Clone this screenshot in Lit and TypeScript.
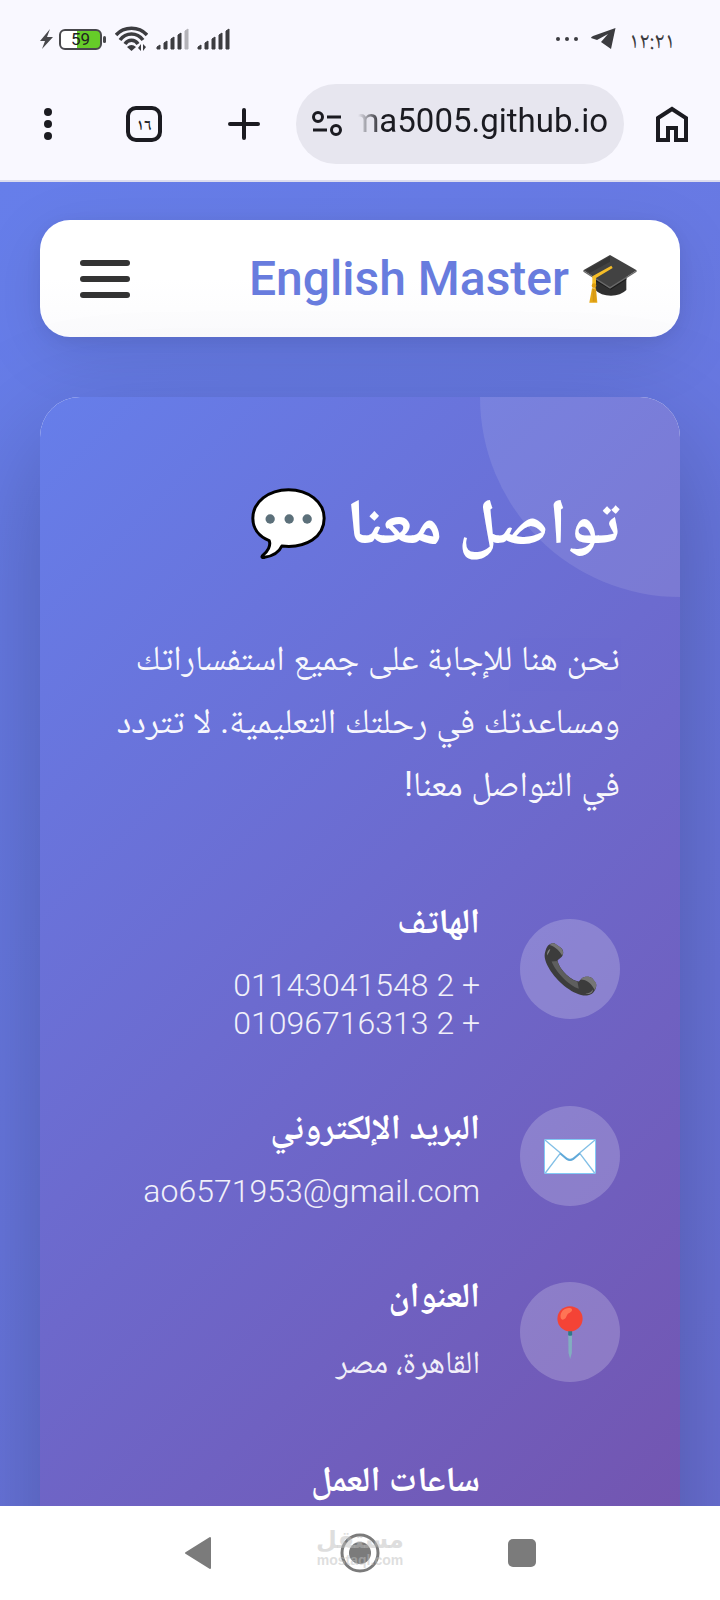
import { LitElement, html, css, svg } from "lit";
import { customElement } from "lit/decorators.js";

const phoneIcon = html`
  <svg class="emoji" width="53" height="53" viewBox="0 0 158 160" aria-hidden="true">
    <path d="M4 22C8 6 20-2 30 1L50 14C60 22 58 36 52 42L40 52C42 74 76 112 104 116L112 108C120 100 138 100 146 108L156 122C160 134 150 156 132 158C96 164 44 122 20 86C4 60-4 42 4 22Z" fill="#3c3c3c"/>
    <path d="M22 56L40 54C44 76 74 110 100 116L104 138C76 130 34 88 22 56Z" fill="#5e5e5e"/>
    <path d="M16 6C22 0 28 0 34 3L50 14C58 22 58 32 54 38C46 24 34 12 16 6Z" fill="#757575"/>
    <path d="M110 110C120 98 136 100 144 106L156 120C158 128 156 136 152 142C144 124 128 110 110 110Z" fill="#757575"/>
    <path d="M8 38C8 26 12 20 18 18C16 26 12 32 8 38Z" fill="#858585"/>
    <path d="M124 153C134 152 142 148 146 140C148 150 138 156 124 153Z" fill="#757575"/>
  </svg>
`;

const mailIcon = html`
  <svg class="emoji" width="52" height="35" viewBox="0 0 156 105" aria-hidden="true">
    <rect x="1.5" y="1.5" width="153" height="102" rx="2" fill="#fff" stroke="#82caf5" stroke-width="3"/>
    <path d="M4 102L48 44M152 102L108 44" stroke="#82bfe6" stroke-width="4"/>
    <path d="M3 3L66 56Q78 66 90 56L153 3" fill="none" stroke="#82bfe6" stroke-width="4"/>
    <path d="M48 43L68 60Q78 67 88 60L108 43" fill="none" stroke="#5fa8d8" stroke-width="5"/>
  </svg>
`;

const pinIcon = html`
  <svg class="emoji" width="26" height="53" viewBox="0 0 77 160" aria-hidden="true">
    <path d="M33 72H45L44 142L39 160L34 142Z" fill="#82aec0"/>
    <path d="M33 72H45V88Q39 92 33 88Z" fill="#2f7889"/>
    <circle cx="38.500" cy="38.500" r="38" fill="#f44336"/>
    <path d="M10 34C8 16 24 4 38 6C48 8 46 16 38 20C28 24 30 30 24 38C18 44 11 42 10 34Z" fill="#ff7555"/>
  </svg>
`;

const contacts = [
  { icon: phoneIcon, title: "الهاتف", lines: ["+ 2 01143041548", "+ 2 01096716313"], latin: true },
  { icon: mailIcon, title: "البريد الإلكتروني", lines: ["ao6571953@gmail.com"], latin: true },
  { icon: pinIcon, title: "العنوان", lines: ["القاهرة، مصر"], latin: false },
];

@customElement("status-bar")
class StatusBar extends LitElement {
  signal(weak: boolean) {
    return html`
      <svg width="33" height="22" viewBox="0 0 33 22" aria-hidden="true">
        ${[5, 9, 13, 17, 21].map((h, i) => svg`
          <path d="M${i * 7 + 1} 21V${22 - h + 2}L${i * 7 + 4} ${22 - h}V21Z"
            fill=${weak && i === 4 ? "#b4b3b9" : "#3c3c40"}
            stroke=${weak && i === 4 ? "#b4b3b9" : "#3c3c40"} stroke-linejoin="round"/>
        `)}
      </svg>
    `;
  }

  render() {
    return html`
      <div class="group">
        <svg width="13" height="20" viewBox="0 0 13 20" aria-hidden="true">
          <path d="M10 0L0 12H5L2 20L13 8H7Z" fill="#48484c"/>
        </svg>
        <span class="battery">59</span>
        <svg class="wifi" width="33" height="26" viewBox="0 0 33 26" aria-hidden="true">
          <g fill="none" stroke="#3c3c40" stroke-width="3.500">
            <path d="M1 9C9 0 24 0 32 9"/>
            <path d="M5 14C11 6 22 6 28 14"/>
            <path d="M10 18C13 13 20 13 23 18"/>
          </g>
          <path d="M16.500 25L12 21Q16.500 17 21 21Z" fill="#3c3c40"/>
          <path d="M26 18V25L23 22ZM28 25V18L31 21Z" fill="#3c3c40"/>
        </svg>
        ${this.signal(true)}
        ${this.signal(false)}
      </div>
      <div class="group end">
        <svg width="22" height="4" viewBox="0 0 22 4" fill="#3c3c40" aria-hidden="true">
          <circle cx="2" cy="2" r="2"/><circle cx="11" cy="2" r="2"/><circle cx="20" cy="2" r="2"/>
        </svg>
        <svg width="25" height="22" viewBox="0 0 25 22" aria-hidden="true">
          <path d="M24.500 0L20 21L10 14L17 6L6 12L0 10Q0 9 2 8Z" fill="#3c3c40"/>
        </svg>
        <time>١٢:٢١</time>
      </div>
    `;
  }

  static styles = css`
    :host {
      display: flex;
      justify-content: space-between;
      align-items: center;
      height: 78px;
      padding: 0 45px 0 40px;
    }
    .group {
      display: flex;
      align-items: center;
      gap: 8px;
    }
    .end {
      gap: 13px;
    }
    .battery {
      position: relative;
      width: 39px;
      height: 17px;
      margin: 0 5px 0 -2px;
      border: 2px solid #48484c;
      border-radius: 6px;
      background: linear-gradient(90deg, #fff 41%, #66cc29 41%);
      color: #222;
      font-size: 17px;
      line-height: 17px;
      text-align: center;
    }
    .battery::after {
      content: "";
      position: absolute;
      right: -6px;
      top: 5px;
      width: 3px;
      height: 7px;
      border-radius: 2px;
      background: #48484c;
    }
    time {
      padding-top: 8px;
      font-family: "Noto Naskh Arabic", "DejaVu Sans", sans-serif;
      font-size: 23px;
      line-height: 24px;
      color: #3c3c40;
    }
  `;
}

@customElement("browser-toolbar")
class BrowserToolbar extends LitElement {
  render() {
    return html`
      <button aria-label="القائمة">
        <svg width="8" height="32" viewBox="0 0 8 32">
          <circle cx="4" cy="4" r="4"/><circle cx="4" cy="16" r="4"/><circle cx="4" cy="28" r="4"/>
        </svg>
      </button>
      <button class="tabs" aria-label="علامات التبويب">١٦</button>
      <button aria-label="علامة تبويب جديدة">
        <svg width="32" height="32" viewBox="0 0 32 32">
          <path d="M16 2V30M2 16H30" stroke="#1b1b21" stroke-width="4" stroke-linecap="round"/>
        </svg>
      </button>
      <label class="address">
        <svg width="30" height="26" viewBox="0 0 30 26" fill="none" stroke="#1b1b21" stroke-width="3" aria-hidden="true">
          <circle cx="6" cy="6" r="4.500"/>
          <path d="M15 6H29M1 19H15"/>
          <circle cx="24" cy="19" r="4.500"/>
        </svg>
        <input type="text" dir="rtl" aria-label="العنوان" value="ma5005.github.io">
      </label>
      <button aria-label="الصفحة الرئيسية">
        <svg width="32" height="36" viewBox="0 0 32 36">
          <path d="M2 12L16 3L30 12V34H20V22H12V34H2Z" fill="none" stroke="#1b1b21" stroke-width="4"/>
        </svg>
      </button>
    `;
  }

  static styles = css`
    :host {
      display: flex;
      align-items: center;
      height: 92px;
      padding: 0 32px 10px;
      border-bottom: 2px solid #dcdcee;
    }
    button {
      display: flex;
      justify-content: center;
      align-items: center;
      width: 32px;
      height: 48px;
      padding: 0;
      border: 0;
      background: none;
      color: #1b1b21;
      fill: #1b1b21;
    }
    .tabs {
      width: 36px;
      height: 36px;
      margin: 0 66px 0 62px;
      padding-top: 6px;
      border: 4px solid #1b1b21;
      border-radius: 10px;
      font: 600 16px/20px "Noto Naskh Arabic", "DejaVu Sans", sans-serif;
    }
    .address {
      flex: 1;
      display: flex;
      align-items: center;
      gap: 16px;
      min-width: 0;
      height: 80px;
      margin: 0 32px 0 36px;
      padding: 0 16px;
      box-sizing: border-box;
      border-radius: 40px;
      background: #e7e6ef;
    }
    .address svg {
      flex: none;
    }
    input {
      flex: 1;
      min-width: 0;
      padding: 0 0 8px;
      border: 0;
      outline: 0;
      background: none;
      color: #1b1b21;
      font: 33px Roboto, sans-serif;
      mask-image: linear-gradient(90deg, transparent, #000 24px);
    }
  `;
}

@customElement("site-header")
class SiteHeader extends LitElement {
  render() {
    return html`
      <a class="logo" href="#">
        <svg width="54" height="48" viewBox="0 0 160 144" aria-hidden="true">
          <path d="M36 70V105Q52 122 83 122Q112 122 129 105V62L82 96Z" fill="#2f2f2f"/>
          <path d="M36 78L82 104L129 74V66L82 94L36 68Z" fill="#1c1c1c"/>
          <path d="M80 0L160 46L80 98L0 46Z" fill="#424242"/>
          <path d="M0 46L80 96L160 46V50L80 101L0 50Z" fill="#6a6a6a"/>
          <path d="M80 4L8 45L20 53L80 20Z" fill="#363636"/>
          <path d="M84 32L27 64V88H38V69L88 39Z" fill="#f5bd28"/>
          <circle cx="32" cy="92" r="7" fill="#e0a010"/>
          <path d="M26 100H38L42 143H18Z" fill="#e6a817"/>
          <path d="M30 102V140M35 106V140" stroke="#c98a10" stroke-width="2"/>
        </svg>
        <span class="name">English Master</span>
      </a>
      <button class="burger" aria-label="فتح القائمة"><i></i><i></i><i></i></button>
    `;
  }

  static styles = css`
    :host {
      display: flex;
      justify-content: space-between;
      align-items: center;
      height: 117px;
      padding: 0 40px;
      border-radius: 30px;
      background: linear-gradient(#fff 50%, #fbfbfd);
      box-shadow: 0 16px 64px rgba(0, 0, 0, 0.1), 0 4px 16px rgba(0, 0, 0, 0.06);
    }
    .logo {
      display: flex;
      align-items: center;
      gap: 14px;
      padding: 0 3px;
      text-decoration: none;
    }
    .name {
      font: 500 48px/56px Roboto, sans-serif;
      color: #687cde;
    }
    .burger {
      display: flex;
      flex-direction: column;
      gap: 10px;
      padding: 0;
      border: 0;
      background: none;
    }
    .burger i {
      width: 50px;
      height: 6px;
      border-radius: 3px;
      background: #333;
    }
  `;
}

@customElement("contact-card")
class ContactCard extends LitElement {
  render() {
    return html`
      <section>
        <h1>
          تواصل معنا
          <svg class="emoji" width="75" height="71" viewBox="0 0 224 213" aria-hidden="true">
            <path d="M112 5C52 5 5 42 5 91C5 122 24 146 54 158C60 172 50 190 34 203C30 208 34 210 40 208C66 204 84 192 92 174C166 182 219 146 219 91C219 42 172 5 112 5Z"
              fill="#fff" stroke="#000" stroke-width="9" stroke-linejoin="round"/>
            <g fill="#5c707a"><circle cx="57" cy="93" r="14"/><circle cx="114" cy="93" r="14"/><circle cx="168" cy="93" r="14"/></g>
          </svg>
        </h1>
        <p class="intro">نحن هنا للإجابة على جميع استفساراتك ومساعدتك في رحلتك التعليمية. لا تتردد في التواصل معنا!</p>
        <ul>
          ${contacts.map(
            (c) => html`
              <li>
                <span class="circle">${c.icon}</span>
                <div>
                  <h2>${c.title}</h2>
                  ${c.lines.map((line) => html`<p class=${c.latin ? "latin" : "arabic"}>${line}</p>`)}
                </div>
              </li>
            `
          )}
          <li>
            <div class="hours"><h2>ساعات العمل</h2></div>
          </li>
        </ul>
      </section>
    `;
  }

  static styles = css`
    :host {
      display: block;
      overflow: hidden;
      border-radius: 40px;
      background: #fff;
      color: #fff;
      font-family: Roboto, "Noto Naskh Arabic", "DejaVu Sans", sans-serif;
    }
    section {
      position: relative;
      overflow: hidden;
      min-height: 1550px;
      box-sizing: border-box;
      padding: 74px 60px 60px;
      background: linear-gradient(135deg, #667eea, #764ba2);
    }
    section::before {
      content: "";
      position: absolute;
      top: -200px;
      right: -200px;
      width: 400px;
      height: 400px;
      border-radius: 50%;
      background: rgba(255, 255, 255, 0.1);
    }
    h1,
    h2,
    p,
    ul {
      margin: 0;
      padding: 0;
    }
    h1 {
      display: flex;
      align-items: center;
      gap: 20px;
      margin-bottom: 52px;
      font-size: 64px;
      line-height: 104px;
    }
    .intro {
      margin-bottom: 80px;
      font-size: 35px;
      line-height: 63px;
      opacity: 0.95;
    }
    ul {
      display: flex;
      flex-direction: column;
      gap: 60px;
      list-style: none;
    }
    li {
      display: flex;
      align-items: center;
      gap: 40px;
    }
    .circle {
      flex: none;
      display: flex;
      justify-content: center;
      align-items: center;
      width: 100px;
      height: 100px;
      border-radius: 50%;
      background: rgba(255, 255, 255, 0.2);
    }
    h2 {
      margin-bottom: 18px;
      font-size: 35px;
      line-height: 52px;
    }
    .latin {
      font: 300 32px/38px Roboto, sans-serif;
      opacity: 0.9;
    }
    .arabic {
      padding-bottom: 10px;
      font-size: 32px;
      line-height: 44px;
      opacity: 0.9;
    }
    .hours {
      margin-right: 140px;
    }
  `;
}

@customElement("system-nav")
class SystemNav extends LitElement {
  render() {
    return html`
      <button aria-label="رجوع">
        <svg width="28" height="34" viewBox="0 0 28 34"><path d="M2 17L26 2V32Z" stroke="#7b7b7b" stroke-width="2" stroke-linejoin="round"/></svg>
      </button>
      <button aria-label="الشاشة الرئيسية">
        <svg width="40" height="40" viewBox="0 0 40 40">
          <circle cx="20" cy="20" r="18" fill="none" stroke="#7b7b7b" stroke-width="3"/>
          <circle cx="20" cy="20" r="11"/>
        </svg>
      </button>
      <button aria-label="التطبيقات الأخيرة">
        <svg width="30" height="30" viewBox="0 0 30 30"><rect x="1" y="1" width="28" height="28" rx="5"/></svg>
      </button>
      <div class="watermark"><b>مستقل</b><span>mostaql.com</span></div>
    `;
  }

  static styles = css`
    :host {
      position: relative;
      display: grid;
      grid-template-columns: repeat(3, 162px);
      justify-content: center;
      align-items: center;
      height: 94px;
      background: #fff;
    }
    button {
      display: flex;
      justify-content: center;
      padding: 0;
      border: 0;
      background: none;
      fill: #7b7b7b;
    }
    .watermark {
      position: absolute;
      inset: 0;
      display: flex;
      flex-direction: column;
      align-items: center;
      justify-content: center;
      padding-bottom: 12px;
      color: rgba(190, 190, 190, 0.5);
      font: bold 14px/14px "Liberation Sans", sans-serif;
      pointer-events: none;
    }
    .watermark b {
      font: bold 24px/26px "DejaVu Sans", sans-serif;
    }
  `;
}

@customElement("app-root")
class AppRoot extends LitElement {
  render() {
    return html`
      <status-bar></status-bar>
      <browser-toolbar></browser-toolbar>
      <main dir="rtl">
        <div class="page">
          <site-header></site-header>
          <contact-card></contact-card>
        </div>
      </main>
      <system-nav></system-nav>
    `;
  }

  static styles = css`
    :host {
      display: flex;
      flex-direction: column;
      height: 100vh;
      background: #f9f8ff;
      font-family: Roboto, sans-serif;
    }
    main {
      flex: 1;
      min-height: 0;
      overflow: auto;
      scrollbar-width: none;
    }
    .page {
      display: flex;
      flex-direction: column;
      gap: 60px;
      padding: 38px 40px;
      background: linear-gradient(135deg, #667eea, #764ba2) 0 0 / 100% 7000px;
    }
    contact-card {
      box-shadow: 0 40px 120px rgba(0, 0, 0, 0.25);
    }
  `;
}
